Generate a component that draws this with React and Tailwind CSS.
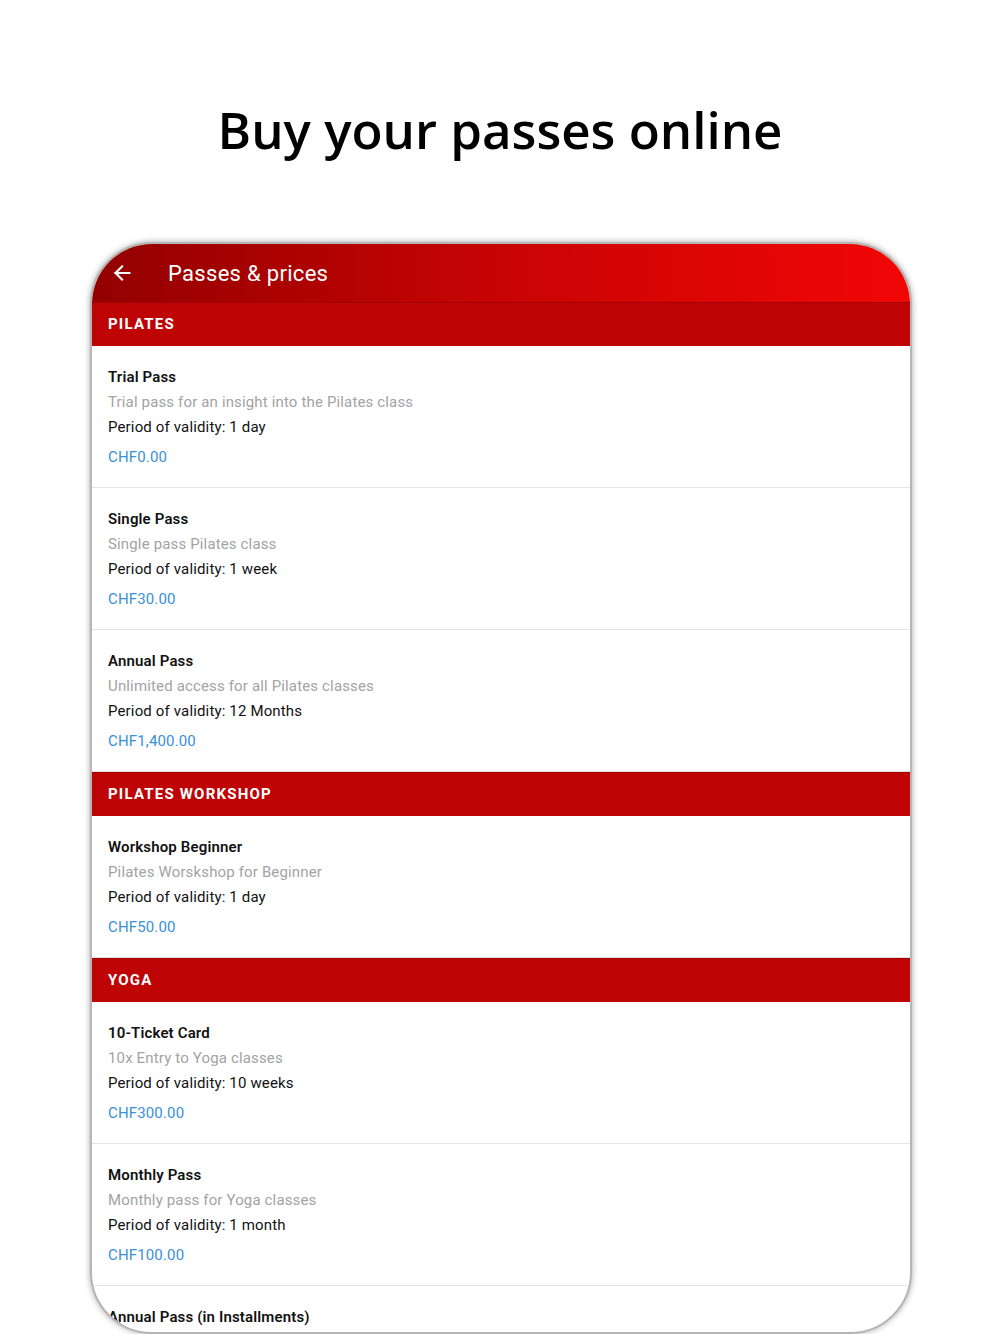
import React from "react";

const sections = [
  {
    name: "PILATES",
    items: [
      { title: "Trial Pass", desc: "Trial pass for an insight into the Pilates class", validity: "1 day", price: "CHF0.00" },
      { title: "Single Pass", desc: "Single pass Pilates class", validity: "1 week", price: "CHF30.00" },
      { title: "Annual Pass", desc: "Unlimited access for all Pilates classes", validity: "12 Months", price: "CHF1,400.00" },
    ],
  },
  {
    name: "PILATES WORKSHOP",
    items: [
      { title: "Workshop Beginner", desc: "Pilates Worskshop for Beginner", validity: "1 day", price: "CHF50.00" },
    ],
  },
  {
    name: "YOGA",
    items: [
      { title: "10-Ticket Card", desc: "10x Entry to Yoga classes", validity: "10 weeks", price: "CHF300.00" },
      { title: "Monthly Pass", desc: "Monthly pass for Yoga classes", validity: "1 month", price: "CHF100.00" },
      { title: "Annual Pass (in Installments)", desc: "Annual pass for Yoga classes", validity: "12 Months", price: "CHF90.00" },
    ],
  },
];

const PassItem = ({ item }) => (
  <div className="px-[16px] pt-[19px] pb-[17px] tracking-[0.15px] border-b border-[#e4e4e4]">
    <div className="text-[15px] leading-[25px] font-semibold text-[#111]">{item.title}</div>
    <div className="text-[15px] leading-[25px] text-[#a3a3a3]">{item.desc}</div>
    <div className="text-[15px] leading-[25px] text-[#111]">Period of validity: {item.validity}</div>
    <div className="mt-[5px] text-[15px] leading-[25px] text-[#3a8fdc]">{item.price}</div>
  </div>
);

export default function App() {
  return (
    <div className="h-[1334px] w-[1000px] overflow-hidden bg-white">
      <h1
        className="pt-[96px] text-center text-[51px] leading-[66px] font-semibold text-black"
        style={{ fontFamily: "'Open Sans', Lato, sans-serif" }}
      >
        Buy your passes online
      </h1>
      <div
        className="mt-[80px] ml-[90px] w-[822px] h-[1092px] rounded-[62px] border-2 border-[#b5b5b5] shadow-[0_0_6px_rgba(0,0,0,0.35)] overflow-hidden bg-white"
        style={{ fontFamily: "Roboto, Inter, sans-serif" }}
      >
        <div className="h-[58px] flex items-center bg-gradient-to-r from-[#930000] via-[#c80404] to-[#f20606] text-white">
          <svg className="ml-[19px] w-[22px] h-[22px]" viewBox="0 0 24 24" fill="none" stroke="white" strokeWidth="2.4" strokeLinecap="square">
            <path d="M20 12H5" />
            <path d="M12 5l-7 7 7 7" />
          </svg>
          <span className="ml-[35px] text-[22px] tracking-[0.3px]">Passes &amp; prices</span>
        </div>
        {sections.map((s) => (
          <div key={s.name}>
            <div className="h-[44px] flex items-center px-[16px] bg-[#be0404] text-white text-[15px] font-bold tracking-[1.2px] border-t border-[#a00000]">
              {s.name}
            </div>
            {s.items.map((item) => (
              <PassItem key={item.title} item={item} />
            ))}
          </div>
        ))}
      </div>
    </div>
  );
}
